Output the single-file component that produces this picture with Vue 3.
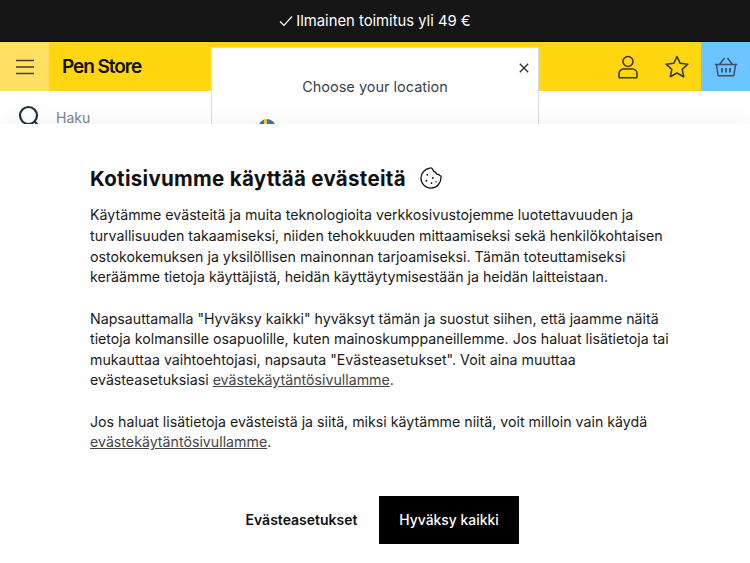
<script setup>
</script>

<template>
  <div class="page">
    <div class="promo">
      <svg class="check" width="14" height="14" viewBox="0 0 14 14"><path d="M1 7.500 5 11.500 13 2.500" fill="none" stroke="#fff" stroke-width="1.200"/></svg>
      <span>Ilmainen toimitus yli 49 €</span>
    </div>
    <header class="head">
      <button class="burger" aria-label="Valikko">
        <svg width="20" height="16" viewBox="0 0 20 16"><path d="M1 1.500h18M1 8h18M1 14.500h18" stroke="#4a4227" stroke-width="1.600" fill="none"/></svg>
      </button>
      <div class="logo">Pen Store</div>
      <div class="spacer"></div>
      <svg class="ico user" width="22" height="24" viewBox="0 0 22 24" fill="none" stroke="#3d3a20" stroke-width="1.600"><circle cx="11" cy="6.500" r="5"/><path d="M2 22v-3.500a4.500 4.500 0 0 1 4.500-4.500h9a4.500 4.500 0 0 1 4.500 4.500V22a.8.8 0 0 1-.8.8H2.800A.8.8 0 0 1 2 22Z"/></svg>
      <svg class="ico star" width="24" height="23" viewBox="0 0 24 23" fill="none" stroke="#3d3a20" stroke-width="1.600" stroke-linejoin="round"><path d="M12 1.500 15.200 8.300 22.800 9.200 17.200 14.300 18.700 21.700 12 18 5.300 21.700 6.800 14.300 1.200 9.200 8.800 8.300Z"/></svg>
      <div class="basket">
        <svg width="24" height="20" viewBox="0 0 24 20" fill="none" stroke="#3b4f70" stroke-width="1.500" stroke-linejoin="round"><path d="M.8 7.500h22.400M2.500 7.500 4 18a1 1 0 0 0 1 .8h14a1 1 0 0 0 1-.8l1.500-10.500M5.500 7.500 10.500 1M18.500 7.500 13.500 1"/><path d="M8 11v4.500M12 11v4.500M16 11v4.500" stroke-width="1.800"/></svg>
      </div>
    </header>
    <div class="search">
      <svg class="lens" width="24" height="24" viewBox="0 0 24 24" fill="none" stroke="#22303a" stroke-width="2.200"><circle cx="10.500" cy="10.500" r="8.500"/><path d="M16.500 16.500 21 21"/></svg>
      <span>Haku</span>
    </div>

    <aside class="locale">
      <svg class="close" width="10" height="10" viewBox="0 0 10 10"><path d="M.8.800l8.400 8.400M9.200.800.800 9.200" stroke="#2b3440" stroke-width="1.400"/></svg>
      <p class="choose">Choose your location</p>
      <svg class="flag" width="18" height="18" viewBox="0 0 18 18"><circle cx="9" cy="9" r="9" fill="#3b76ad"/><path d="M6 0h3v18H6zM0 7.500h18v3H0z" fill="#fccc2c"/></svg>
    </aside>

    <section class="consent">
      <h2>Kotisivumme käyttää evästeitä
        <svg class="cookie" width="22" height="22" viewBox="0 0 24 24" fill="none" stroke="#111" stroke-width="1.400" stroke-linejoin="round"><path d="M10.500 1.200C12 .8 13.300 1.300 14 3c.4 1.600 1.500 2.600 3 2.500.3 1.800 1.700 2.800 3.300 2.500.6 1 1.500 1.700 2.700 2 .4 7-4.300 13-11 13C6 23 1 18 1 12 1 7 5 2.300 10.500 1.200Z"/><circle cx="8" cy="8.500" r="1" fill="#111" stroke="none"/><circle cx="14" cy="12" r="1" fill="#111" stroke="none"/><circle cx="7" cy="15" r="1" fill="#111" stroke="none"/><circle cx="12.500" cy="17.500" r="1" fill="#111" stroke="none"/><circle cx="17.500" cy="16" r=".8" fill="#111" stroke="none"/></svg>
      </h2>
      <p>Käytämme evästeitä ja muita teknologioita verkkosivustojemme luotettavuuden ja turvallisuuden takaamiseksi, niiden tehokkuuden mittaamiseksi sekä henkilökohtaisen ostokokemuksen ja yksilöllisen mainonnan tarjoamiseksi. Tämän toteuttamiseksi keräämme tietoja käyttäjistä, heidän käyttäytymisestään ja heidän laitteistaan.</p>
      <p>Napsauttamalla "Hyväksy kaikki" hyväksyt tämän ja suostut siihen, että jaamme näitä tietoja kolmansille osapuolille, kuten mainoskumppaneillemme. Jos haluat lisätietoja tai mukauttaa vaihtoehtojasi, napsauta "Evästeasetukset". Voit aina muuttaa evästeasetuksiasi <a>evästekäytäntösivullamme</a>.</p>
      <p>Jos haluat lisätietoja evästeistä ja siitä, miksi käytämme niitä, voit milloin vain käydä <a>evästekäytäntösivullamme</a>.</p>
      <div class="actions">
        <button class="plain">Evästeasetukset</button>
        <button class="solid">Hyväksy kaikki</button>
      </div>
    </section>
  </div>
</template>

<style>
html, body { margin: 0; background: #fff; overflow: hidden; }
</style>

<style scoped>
.page {
  position: relative;
  width: 750px;
  height: 563px;
  overflow: hidden;
  background: #fff;
  font-family: Inter, "Liberation Sans", sans-serif;
  color: #111;
}
.promo {
  height: 41px;
  background: #161616;
  border-bottom: 1px solid #000;
  color: #fff;
  font-size: 14.800px;
  display: flex;
  align-items: center;
  justify-content: center;
  gap: 3px;
}
.head {
  height: 49px;
  background: #ffd60f;
  display: flex;
  align-items: center;
}
.burger {
  width: 49px;
  height: 49px;
  border: 0;
  padding: 0;
  background: #ffe062;
  display: flex;
  align-items: center;
  justify-content: center;
}
.logo {
  margin-left: 13px;
  margin-top: -1px;
  font-size: 19px;
  font-weight: 600;
  letter-spacing: -1.050px;
  color: #111;
}
.spacer { flex: 1; }
.ico { flex: none; }
.user { margin-right: 26px; }
.star { margin-right: 12px; }
.basket {
  width: 49px;
  height: 49px;
  background: #6cc5fe;
  display: flex;
  align-items: center;
  justify-content: center;
}
.search {
  height: 33px;
  display: flex;
  padding: 0 0 0 18px;
  gap: 14px;
  color: #7b848c;
  font-size: 14px;
  align-items: flex-start;
}
.lens { margin-top: 14px; flex: none; }
.search span { margin-top: 18px; }
.locale {
  position: absolute;
  left: 211px;
  top: 47px;
  width: 326px;
  height: 200px;
  background: #fff;
  border: 1px solid #ddd;
}
.close { position: absolute; left: 307px; top: 15px; }
.choose {
  margin: 30px 0 0;
  text-align: center;
  font-size: 14.500px;
  color: #39424c;
}
.flag { position: absolute; left: 46px; top: 71px; }
.consent {
  position: absolute;
  left: 0;
  right: 0;
  top: 124px;
  bottom: 0;
  background: #fff;
  box-shadow: 0 -8px 16px rgba(0, 0, 0, 0.03);
  padding: 0 77px 0 90px;
  box-sizing: border-box;
}
h2 {
  margin: 39px 0 0;
  height: 30px;
  display: flex;
  align-items: center;
  gap: 14px;
  font-size: 20.500px;
  font-weight: 700;
  letter-spacing: 0.300px;
  color: #111;
}
p { margin: 0; }
.consent p {
  font-size: 14.200px;
  line-height: 20.625px;
  margin-bottom: 20.625px;
  color: #1a1a1a;
}
h2 + p { margin-top: 12.400px; }
.consent a { text-decoration: underline; color: #444; }
.actions {
  margin: 43.100px -77px 0 -90px;
  display: flex;
  justify-content: center;
  align-items: center;
  gap: 7px;
}
button { font-family: inherit; cursor: pointer; }
.plain {
  width: 141px;
  height: 48px;
  padding: 0;
  border: 0;
  background: none;
  color: #111;
  font-size: 14px;
  font-weight: 600;
}
.solid {
  width: 140px;
  height: 48px;
  padding: 1px 0 0;
  border: 0;
  background: #000;
  color: #fff;
  font-size: 13.900px;
  font-weight: 500;
}
</style>
